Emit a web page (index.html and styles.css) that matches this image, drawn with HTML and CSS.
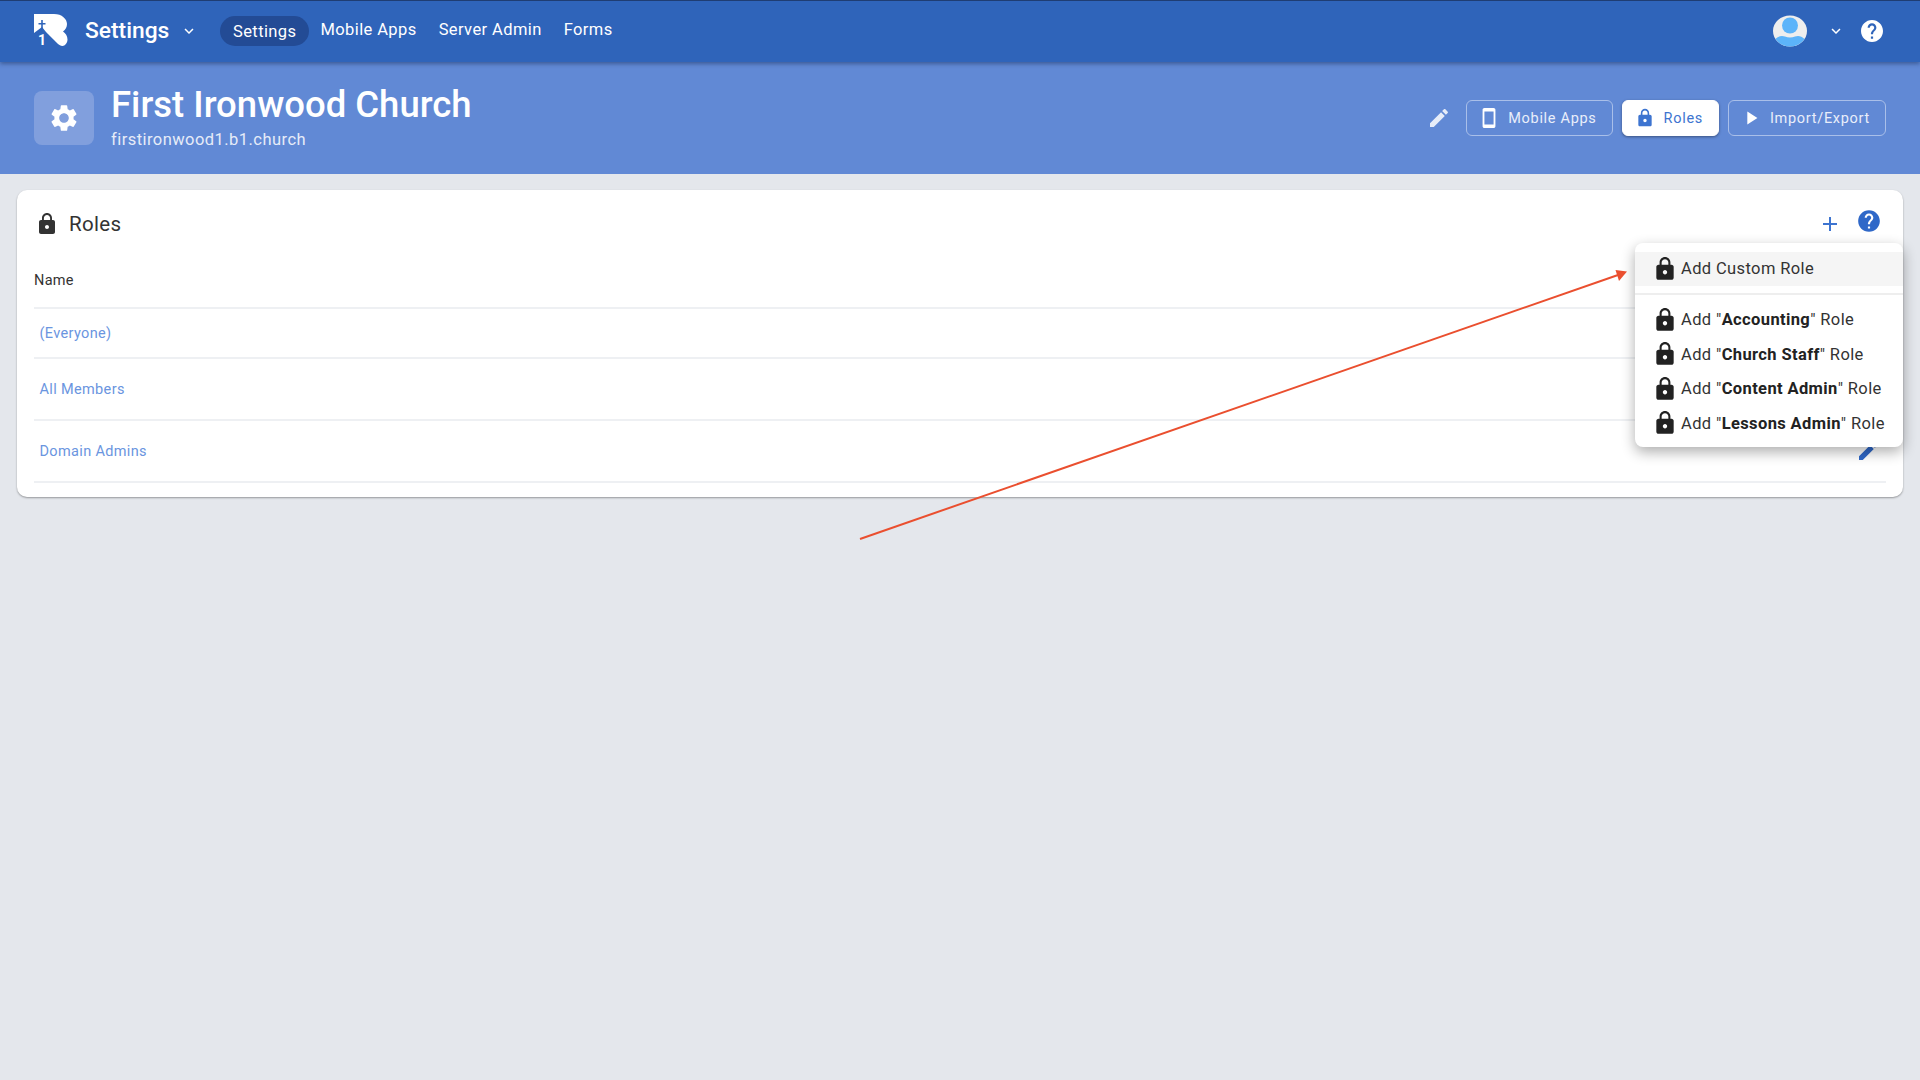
FILE: index.html
```html
<!DOCTYPE html>
<html lang="en">
<head>
<meta charset="utf-8">
<title>Roles</title>
<link rel="stylesheet" href="styles.css">
</head>
<body>
<svg class="sprites" width="0" height="0">
  <symbol id="lock" viewBox="0 0 24 24"><path d="M18 8h-1V6c0-2.76-2.24-5-5-5S7 3.24 7 6v2H6c-1.1 0-2 .9-2 2v10c0 1.1.9 2 2 2h12c1.1 0 2-.9 2-2V10c0-1.1-.9-2-2-2zm-6 9c-1.1 0-2-.9-2-2s.9-2 2-2 2 .9 2 2-.9 2-2 2zm3.1-9H8.9V6c0-1.71 1.39-3.1 3.1-3.1 1.71 0 3.1 1.39 3.1 3.1v2z"/></symbol>
  <symbol id="edit" viewBox="0 0 24 24"><path d="M3 17.25V21h3.75L17.81 9.94l-3.75-3.75L3 17.25zM20.71 7.04c.39-.39.39-1.02 0-1.41l-2.34-2.34c-.39-.39-1.02-.39-1.41 0l-1.83 1.83 3.75 3.75 1.83-1.83z"/></symbol>
  <symbol id="help" viewBox="0 0 24 24"><path d="M12 2C6.48 2 2 6.48 2 12s4.48 10 10 10 10-4.48 10-10S17.52 2 12 2zm1 17h-2v-2h2v2zm2.07-7.75l-.9.92C13.45 12.9 13 13.5 13 15h-2v-.5c0-1.1.45-2.1 1.17-2.83l1.24-1.26c.37-.36.59-.86.59-1.41 0-1.1-.9-2-2-2s-2 .9-2 2H8c0-2.21 1.79-4 4-4s4 1.79 4 4c0 .88-.36 1.68-.93 2.25z"/></symbol>
  <symbol id="chev" viewBox="0 0 24 24"><path d="M7.41 8.59 12 13.17l4.59-4.58L18 10l-6 6-6-6z"/></symbol>
</svg>

<header class="topbar">
  <div class="brand">
    <svg class="logo" viewBox="0 0 34 33"><path class="logo-r" d="M0 0h20c8 0 13 5 13 10 0 3-1.500 6-4 7.500 2.500 1.500 4.500 4.500 4.500 8 0 3.500-2.500 6.500-5 6.500-2 0-4-1.500-6-3.500L12 18l-4-5-8 6z"/><path class="logo-cross" d="M7.200 6h1.600v3h2.700v1.500H8.800V19H7.200v-8.500H4.500V9h2.700z"/><text class="logo-one" x="4" y="31">1</text></svg>
    <span class="brand-name">Settings</span>
    <svg class="chev chev-brand"><use href="#chev"/></svg>
  </div>
  <nav class="mainnav">
    <a class="navlink navlink-on">Settings</a>
    <a class="navlink">Mobile Apps</a>
    <a class="navlink">Server Admin</a>
    <a class="navlink">Forms</a>
  </nav>
  <div class="usermenu">
    <svg class="avatar" viewBox="0 0 34 32"><ellipse cx="17" cy="16" rx="17" ry="15.500" fill="#eeeeee"/><circle cx="17" cy="10.500" r="8" fill="#5cb4fa"/><path d="M2.500 24c3-3.500 7-3.500 9.500-2.500 3 1.300 7 1.300 10 0 2.500-1 6.500-1 9.500 2.500-3 4.500-8.500 7.500-14.500 7.500S5.500 28.500 2.500 24z" fill="#5cb4fa"/></svg>
    <svg class="chev chev-user"><use href="#chev"/></svg>
    <svg class="help-top" viewBox="2 2 20 20"><circle cx="12" cy="12" r="10" fill="#2f64ba"/><use href="#help" x="0" y="0" width="24" height="24" fill="#fff"/></svg>
  </div>
</header>

<section class="banner">
  <div class="tile">
    <svg class="gear" viewBox="0 0 24 24"><path d="M19.140 12.940c.04-.3.060-.61.060-.94 0-.32-.020-.64-.070-.94l2.030-1.580a.49.49 0 0 0 .12-.61l-1.920-3.320a.488.488 0 0 0-.59-.22l-2.390.96c-.5-.38-1.030-.7-1.620-.94l-.36-2.540a.484.484 0 0 0-.48-.41h-3.840c-.24 0-.43.170-.47.410l-.36 2.540c-.59.240-1.130.570-1.620.94l-2.390-.96c-.220-.080-.470 0-.59.220L2.740 8.870c-.120.210-.080.470.120.610l2.030 1.580c-.050.300-.090.630-.090.940s.020.640.070.940l-2.030 1.580a.49.49 0 0 0-.12.610l1.920 3.320c.120.220.370.290.590.220l2.390-.96c.5.380 1.030.7 1.620.94l.36 2.540c.050.240.240.410.480.410h3.840c.24 0 .44-.170.470-.410l.36-2.540c.59-.240 1.130-.560 1.620-.94l2.390.96c.220.080.470 0 .59-.220l1.920-3.320c.120-.220.070-.470-.120-.610l-2.010-1.580zM12 15.600c-1.980 0-3.600-1.620-3.600-3.600s1.620-3.600 3.600-3.600 3.600 1.620 3.600 3.600-1.620 3.600-3.600 3.600z"/></svg>
  </div>
  <div class="banner-text">
    <h1 class="banner-title">First Ironwood Church</h1>
    <div class="banner-sub">firstironwood1.b1.church</div>
  </div>
  <div class="banner-actions">
    <svg class="banner-edit"><use href="#edit"/></svg>
    <a class="btn">
      <svg class="btn-icon" viewBox="0 0 24 24"><path d="M17 1.010 7 1c-1.100 0-2 .9-2 2v18c0 1.100.9 2 2 2h10c1.100 0 2-.9 2-2V3c0-1.100-.9-1.990-2-1.990zM17 19H7V5h10v14z"/></svg>
      Mobile Apps
    </a>
    <a class="btn btn-on">
      <svg class="btn-icon"><use href="#lock"/></svg>
      Roles
    </a>
    <a class="btn">
      <svg class="btn-icon" viewBox="0 0 24 24"><path d="M8 5v14l11-7z"/></svg>
      Import/Export
    </a>
  </div>
</section>

<main class="content">
  <section class="card">
    <div class="card-head">
      <svg class="card-lock"><use href="#lock"/></svg>
      <h2 class="card-title">Roles</h2>
      <div class="card-tools">
        <svg class="tool-add" viewBox="0 0 24 24"><path d="M19 13h-6v6h-2v-6H5v-2h6V5h2v6h6v2z"/></svg>
        <svg class="tool-help"><use href="#help"/></svg>
      </div>
    </div>
    <div class="row row-head">Name</div>
    <div class="row row-a"><a class="role">(Everyone)</a></div>
    <div class="row row-b"><a class="role">All Members</a></div>
    <div class="row row-c">
      <a class="role">Domain Admins</a>
      <svg class="row-edit"><use href="#edit"/></svg>
    </div>

    <div class="menu">
      <div class="menu-item menu-item-hover"><svg class="menu-lock"><use href="#lock"/></svg><span>Add Custom Role</span></div>
      <div class="menu-div"></div>
      <div class="menu-item"><svg class="menu-lock"><use href="#lock"/></svg><span>Add "<b>Accounting</b>" Role</span></div>
      <div class="menu-item"><svg class="menu-lock"><use href="#lock"/></svg><span>Add "<b>Church Staff</b>" Role</span></div>
      <div class="menu-item"><svg class="menu-lock"><use href="#lock"/></svg><span>Add "<b>Content Admin</b>" Role</span></div>
      <div class="menu-item"><svg class="menu-lock"><use href="#lock"/></svg><span>Add "<b>Lessons Admin</b>" Role</span></div>
    </div>
  </section>
</main>

<svg class="arrow" viewBox="0 0 1920 1080">
  <line x1="860" y1="539" x2="1618" y2="275" stroke="#ea4f2f" stroke-width="2"/>
  <path d="M1627 271.500 1615.500 270 1619 281z" fill="#ea4f2f"/>
</svg>
</body>
</html>
```

FILE: styles.css
```css
* { box-sizing: border-box; }
html, body { margin: 0; height: 100%; }
body {
  position: relative;
  min-height: 1080px;
  background: #e4e7ec;
  font-family: Roboto, "Liberation Sans", sans-serif;
  color: #333;
  overflow: hidden;
}
.sprites { position: absolute; }
a { text-decoration: none; }

/* top bar */
.topbar {
  position: relative;
  z-index: 2;
  height: 62px;
  display: flex;
  align-items: center;
  padding: 0 35px 2px 34px;
  background: #2f64ba;
  border-top: 1px solid #1f3d73;
  box-shadow: 0 2px 4px rgba(20, 40, 80, .45);
}
.brand { display: flex; align-items: center; width: 186px; }
.logo { width: 34px; height: 33px; flex: none; overflow: visible; }
.logo-r { fill: #fff; }
.logo-cross { fill: #2f64ba; }
.logo-one { fill: #fff; font-size: 14px; font-weight: 700; }
.brand-name { margin-left: 17px; font-size: 22.800px; font-weight: 500; color: #fff; }
.chev { width: 18px; height: 18px; fill: #fff; flex: none; }
.chev-brand { margin-left: 11px; }
.mainnav { display: flex; align-items: center; }
.navlink {
  font-size: 16.500px;
  letter-spacing: .4px;
  color: #fff;
  padding: 0 11px;
  margin-bottom: 3px;
}
.navlink-on {
  height: 30px;
  margin: 0;
  padding: 0 13px;
  line-height: 31px;
  border-radius: 15px;
  background: #234b95;
}
.usermenu { margin-left: auto; display: flex; align-items: center; padding-right: 2px; }
.avatar { width: 34px; height: 32px; }
.chev-user { margin-left: 20px; }
.help-top { width: 22px; height: 22px; margin-left: 16px; }

/* banner */
.banner {
  height: 112px;
  display: flex;
  align-items: center;
  padding: 0 34px;
  background: #6189d5;
  color: #fff;
}
.tile {
  width: 60px;
  height: 54px;
  border-radius: 8px;
  background: #819fdd;
  display: flex;
  align-items: center;
  justify-content: center;
}
.gear { width: 32px; height: 32px; fill: #fff; }
.banner-text { margin-left: 17px; margin-top: -3px; }
.banner-title { margin: 0; font-size: 36.500px; line-height: 42px; font-weight: 500; }
.banner-sub { margin-top: 4px; font-size: 16.500px; line-height: 20px; letter-spacing: .45px; color: #e6ecf8; }
.banner-actions { margin-left: auto; display: flex; align-items: center; gap: 9px; }
.banner-edit { width: 24px; height: 24px; fill: #e6ecf8; margin-right: 6px; }
.btn {
  height: 36px;
  display: flex;
  align-items: center;
  padding: 0 15px 0 11px;
  border: 1px solid #a9bfe9;
  border-radius: 6px;
  font-size: 14.500px;
  letter-spacing: .7px;
  color: #e9eefa;
}
.btn-icon { width: 22px; height: 22px; margin-right: 8px; fill: #fff; }
.btn-on {
  background: #fff;
  border-color: #fff;
  color: #3d74d0;
  box-shadow: 0 1px 3px rgba(0, 0, 0, .4);
}
.btn-on .btn-icon { fill: #3d74d0; width: 20px; height: 20px; margin: 0 9px 0 1px; }

/* card */
.content { padding: 16px 17px; }
.card {
  position: relative;
  height: 307px;
  padding: 0 17px;
  background: #fff;
  border-radius: 10px;
  box-shadow: 0 1px 2px rgba(0, 0, 0, .35);
}
.card-head { height: 65px; display: flex; align-items: center; }
.card-lock { width: 24px; height: 24px; fill: #333; margin: 2px 0 0 1px; }
.card-title { margin: 2px 0 0 10px; font-size: 20.500px; font-weight: 400; letter-spacing: .3px; color: #333; }
.card-tools { margin-left: auto; display: flex; align-items: center; margin-right: 4px; }
.tool-add { width: 24px; height: 24px; fill: #3d74d0; margin-top: 2px; }
.tool-help { width: 26px; height: 26px; fill: #2f68c8; margin-left: 14px; margin-top: -3px; }
.row {
  display: flex;
  align-items: center;
  justify-content: space-between;
  border-bottom: 2px solid #eef0f3;
  font-size: 14.500px;
}
.row-head { height: 54px; padding-bottom: 2px; letter-spacing: .3px; color: #333; }
.row-a { height: 50px; }
.row-b { height: 62px; }
.row-c { height: 62px; }
.role { margin-left: 5.500px; color: #6a95e0; letter-spacing: .35px; }
.row-edit { width: 24px; height: 24px; fill: #2f68c8; margin-right: 6px; }

/* dropdown */
.menu {
  position: absolute;
  top: 53px;
  right: 0;
  width: 268px;
  height: 204px;
  padding-top: 9px;
  background: #fff;
  border-radius: 8px;
  box-shadow: 0 5px 14px rgba(0, 0, 0, .32);
}
.menu-item {
  display: flex;
  align-items: center;
  height: 34.500px;
  padding-left: 17px;
  font-size: 16.500px;
  letter-spacing: .38px;
  color: #333;
}
.menu-item-hover { height: 34px; padding-bottom: 1px; background: #f5f5f5; }
.menu-item b { font-weight: 700; color: #222; }
.menu-div { height: 2px; margin: 7px 0 7.500px; background: #eeeeee; }
.menu-lock { width: 26px; height: 26px; margin-right: 3px; fill: #222; flex: none; }

/* annotation */
.arrow { position: absolute; left: 0; top: 0; width: 1920px; height: 1080px; z-index: 3; pointer-events: none; }
```
